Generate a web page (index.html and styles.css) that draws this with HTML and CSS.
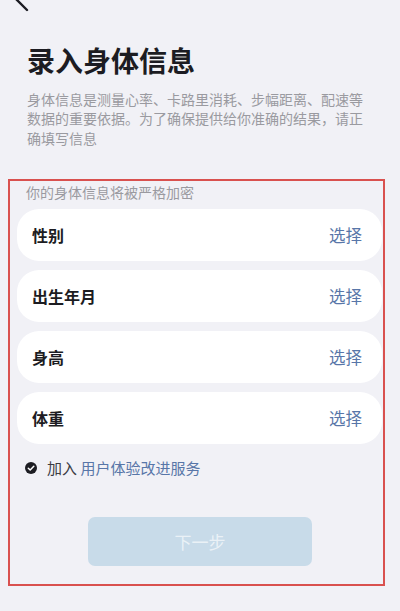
FILE: index.html
```html
<!DOCTYPE html>
<html lang="zh-CN">
<head>
<meta charset="utf-8">
<title>录入身体信息</title>
<link rel="stylesheet" href="styles.css">
</head>
<body>
<div class="page">
  <div class="nav">
    <svg class="back" width="30" height="14" viewBox="0 0 30 14">
      <path d="M28 -12 L16 -1 L27 10" fill="none" stroke="#1c1c22" stroke-width="2.4" stroke-linecap="round" stroke-linejoin="round"/>
    </svg>
  </div>
  <div class="intro">
    <h1 class="title">录入身体信息</h1>
    <p class="desc">身体信息是测量心率、卡路里消耗、步幅距离、配速等数据的重要依据。为了确保提供给你准确的结果，请正确填写信息</p>
  </div>
  <div class="box">
    <div class="note">你的身体信息将被严格加密</div>
    <div class="list">
      <div class="card"><span class="label">性别</span><span class="pick">选择</span></div>
      <div class="card"><span class="label">出生年月</span><span class="pick">选择</span></div>
      <div class="card"><span class="label">身高</span><span class="pick">选择</span></div>
      <div class="card"><span class="label">体重</span><span class="pick">选择</span></div>
    </div>
    <div class="agree">
      <svg class="check" width="12" height="12" viewBox="0 0 12 12">
        <circle cx="6" cy="6" r="6" fill="#1c1c22"/>
        <path d="M3.3 6.2 L5.2 8 L8.8 4.3" fill="none" stroke="#ffffff" stroke-width="1.5" stroke-linecap="round" stroke-linejoin="round"/>
      </svg>
      <span class="agree-text">加入 <span class="link">用户体验改进服务</span></span>
    </div>
    <div class="btn-row">
      <div class="btn">下一步</div>
    </div>
  </div>
</div>
</body>
</html>
```

FILE: styles.css
```css
* { box-sizing: border-box; }
html, body {
  margin: 0;
  padding: 0;
  background: #f1f1f6;
}
body {
  font-family: "Noto Sans CJK SC", "Noto Sans", sans-serif;
  color: #1c1c22;
}
.page {
  width: 400px;
  height: 611px;
  overflow: hidden;
}
.nav {
  height: 42px;
}
.back {
  display: block;
  overflow: visible;
}
.intro {
  padding: 0 27px;
}
.title {
  margin: 0;
  font-size: 28px;
  line-height: 36px;
  font-weight: 700;
  color: #1c1c22;
}
.desc {
  margin: 12px 0 0;
  font-size: 14px;
  line-height: 19.3px;
  color: #9a9aa0;
}
.box {
  margin: 31px 0 0 8px;
  width: 377px;
  border: 2px solid #d9514f;
  padding: 1px 1px 18px 7px;
}
.note {
  padding-left: 9px;
  font-size: 14px;
  line-height: 20px;
  color: #9a9aa0;
}
.list {
  margin-top: 7px;
  display: flex;
  flex-direction: column;
  gap: 9px;
}
.card {
  height: 52px;
  background: #ffffff;
  border-radius: 22px;
  display: flex;
  align-items: center;
  justify-content: space-between;
  padding: 0 20px 0 15px;
}
.label {
  font-size: 16px;
  font-weight: 700;
  color: #1c1c22;
}
.pick {
  font-size: 16.5px;
  color: #5876a8;
}
.agree {
  margin-top: 14px;
  padding-left: 8px;
  display: flex;
  align-items: center;
  gap: 10px;
  height: 20px;
}
.check {
  display: block;
  flex: none;
}
.agree-text {
  font-size: 15px;
  line-height: 20px;
  color: #3c3c44;
}
.link {
  color: #5876a8;
}
.btn-row {
  margin-top: 39px;
  display: flex;
  padding-left: 71px;
}
.btn {
  width: 224px;
  height: 49px;
  border-radius: 7px;
  background: #c8dbe9;
  color: rgba(255, 255, 255, 0.65);
  font-size: 17px;
  display: flex;
  align-items: center;
  justify-content: center;
}
```
